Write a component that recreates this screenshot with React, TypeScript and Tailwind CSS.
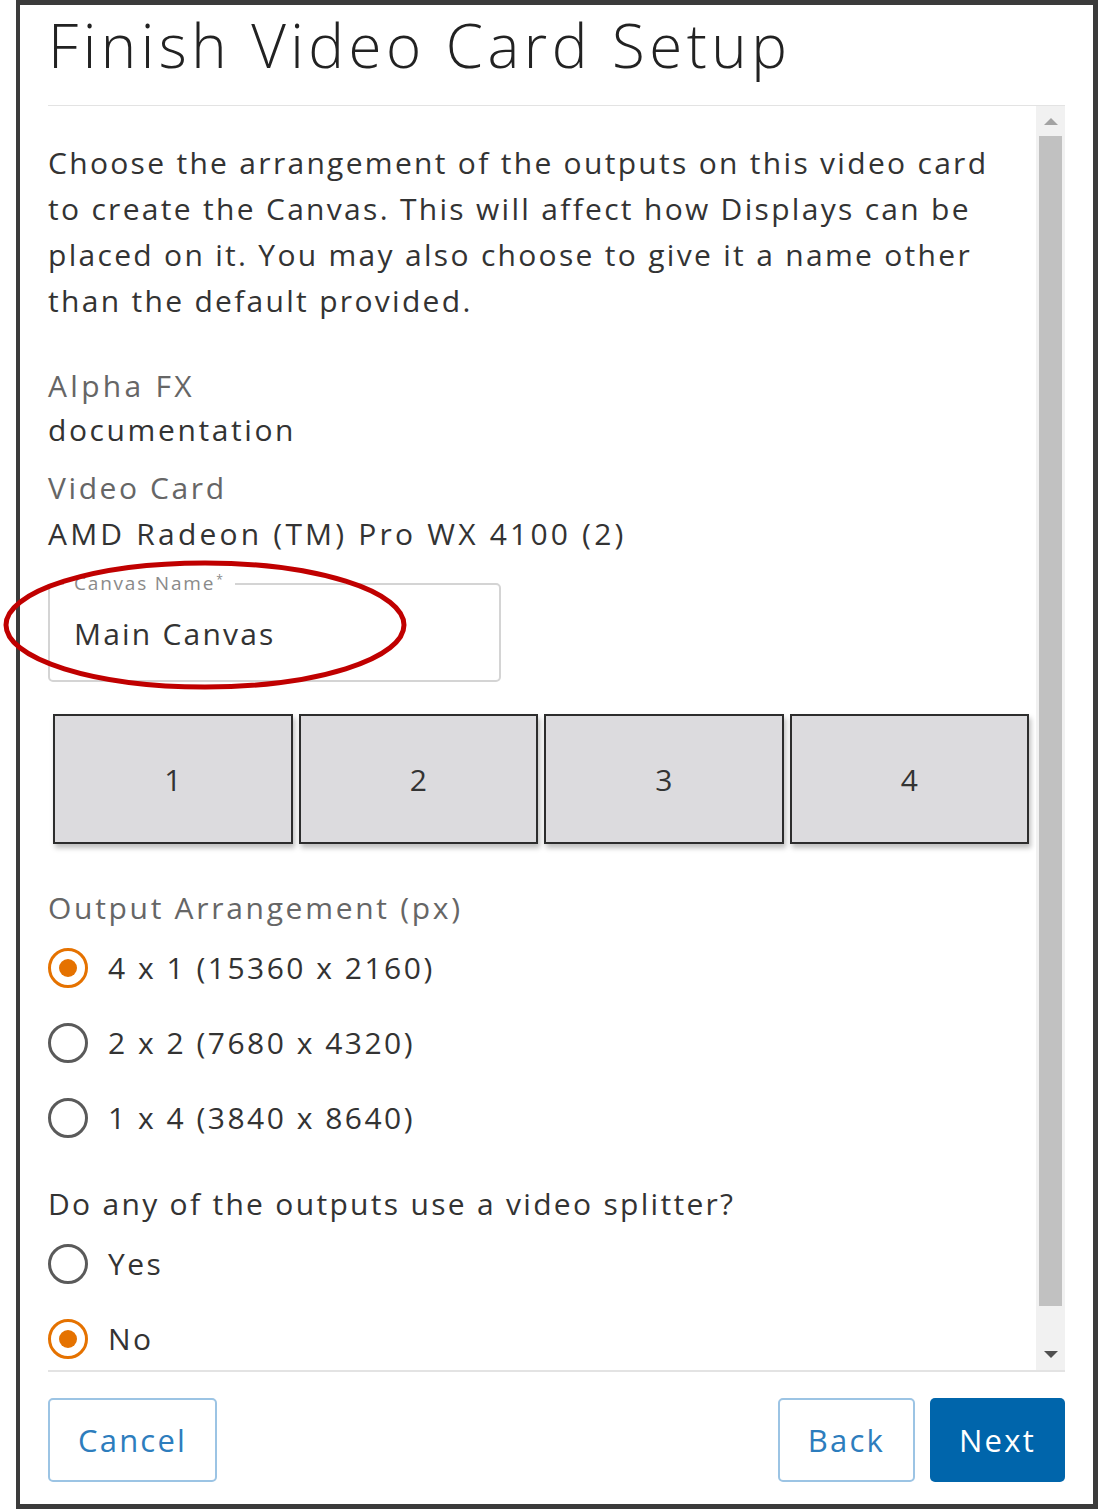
import React, { useState } from 'react';

const FONT = { fontFamily: '"Open Sans", "Noto Sans", Arial, sans-serif' };

function Radio({ checked, label, onClick }: { checked: boolean; label: string; onClick: () => void }) {
  return (
    <button type="button" onClick={onClick} className="flex items-center h-[75px] text-left">
      <span
        className={`flex items-center justify-center w-[40px] h-[40px] rounded-full border-[3px] ${
          checked ? 'border-[#e57200]' : 'border-[#5a5a5a]'
        }`}
      >
        {checked && <span className="w-[18px] h-[18px] rounded-full bg-[#e57200]" />}
      </span>
      <span className="ml-[20px] text-[30px] tracking-[2.5px] text-[#333]">{label}</span>
    </button>
  );
}

export default function App() {
  const [arrangement, setArrangement] = useState('4x1');
  const [splitter, setSplitter] = useState('no');
  const [name, setName] = useState('Main Canvas');

  return (
    <div className="w-[1098px] h-[1509px] bg-white pl-[16px]" style={FONT}>
      <div className="relative h-full flex flex-col border-[5px] border-[#3b3b3b] border-l-[4px] bg-white">
        {/* header */}
        <div className="px-[28px] h-[101px] flex flex-col">
          <h1 className="text-[60px] leading-none font-light tracking-[4.5px] text-[#222] mt-[10px]">
            Finish Video Card Setup
          </h1>
          <div className="mt-auto h-[1px] bg-[#e3e3e3]" />
        </div>

        {/* scroll body */}
        <div className="flex h-[1264px] mx-[28px]">
          <div className="flex-1 min-w-0 pt-[34px] text-[#333]">
            <p className="text-[30px] leading-[46px] tracking-[2.3px] whitespace-nowrap">
              Choose the arrangement of the outputs on this video card
              <br />
              to create the Canvas. This will affect how Displays can be
              <br />
              placed on it. You may also choose to give it a name other
              <br />
              than the default provided.
            </p>

            <div className="mt-[40px] text-[30px] leading-[44px] tracking-[2.6px]">
              <div className="text-[#666] tracking-[3.3px]">Alpha FX</div>
              <div>documentation</div>
            </div>
            <div className="mt-[13px] text-[30px] leading-[46px] tracking-[2.6px]">
              <div className="text-[#666]">Video Card</div>
              <div className="tracking-[3.2px]">AMD Radeon (TM) Pro WX 4100 (2)</div>
            </div>

            {/* canvas name field */}
            <div className="relative mt-[26px] w-[453px] h-[99px] border-[2px] border-[#d4d4d4] rounded-[5px]">
              <span className="absolute -top-[14px] left-[14px] px-[10px] bg-white text-[19px] leading-[24px] tracking-[1.8px] text-[#8a8a8a]">
                Canvas Name<sup className="text-[12px] ml-[1px]">*</sup>
              </span>
              <input
                value={name}
                onChange={e => setName(e.target.value)}
                className="w-full h-full px-[24px] pt-[2px] text-[30px] tracking-[2.2px] text-[#333] outline-none bg-transparent"
              />
            </div>

            {/* output boxes */}
            <div className="mt-[32px] ml-[5px] grid grid-cols-4 gap-[6px] w-[976px]">
              {[1, 2, 3, 4].map(n => (
                <div
                  key={n}
                  className="h-[130px] bg-[#dcdbde] border-[2px] border-[#2d2d2d] shadow-[2px_4px_5px_rgba(0,0,0,0.25)] flex items-center justify-center text-[30px] text-[#333]"
                >
                  {n}
                </div>
              ))}
            </div>

            <div className="mt-[42px] text-[30px] leading-[44px] tracking-[2.7px] text-[#666]">
              Output Arrangement (px)
            </div>
            <div className="flex flex-col">
              <Radio checked={arrangement === '4x1'} label="4 x 1 (15360 x 2160)" onClick={() => setArrangement('4x1')} />
              <Radio checked={arrangement === '2x2'} label="2 x 2 (7680 x 4320)" onClick={() => setArrangement('2x2')} />
              <Radio checked={arrangement === '1x4'} label="1 x 4 (3840 x 8640)" onClick={() => setArrangement('1x4')} />
            </div>

            <div className="mt-[27px] text-[30px] leading-[44px] tracking-[2.3px]">
              Do any of the outputs use a video splitter?
            </div>
            <div className="flex flex-col">
              <Radio checked={splitter === 'yes'} label="Yes" onClick={() => setSplitter('yes')} />
              <Radio checked={splitter === 'no'} label="No" onClick={() => setSplitter('no')} />
            </div>
          </div>

          {/* scrollbar */}
          <div className="flex-none w-[29px] bg-[#f1f1f1] flex flex-col items-center">
            <div className="h-[30px] flex items-center justify-center">
              <span className="w-0 h-0 border-x-[7px] border-x-transparent border-b-[7px] border-b-[#a3a3a3]" />
            </div>
            <div className="w-[23px] h-[1170px] bg-[#c1c1c1]" />
            <div className="flex-1 flex items-end justify-center pb-[12px]">
              <span className="w-0 h-0 border-x-[7px] border-x-transparent border-t-[7px] border-t-[#505050]" />
            </div>
          </div>
        </div>

        {/* footer */}
        <div className="mx-[28px] border-t-[2px] border-[#e3e3e3] flex-1 flex items-start pt-[26px]">
          <button className="h-[84px] px-[28px] rounded-[5px] border-[2px] border-[#9cc4e4] text-[31px] tracking-[2.2px] text-[#2d7dbd] font-medium">
            Cancel
          </button>
          <div className="ml-auto flex gap-[15px]">
            <button className="h-[84px] px-[28px] rounded-[5px] border-[2px] border-[#9cc4e4] text-[31px] tracking-[2.2px] text-[#2d7dbd] font-medium">
              Back
            </button>
            <button className="h-[84px] w-[135px] rounded-[5px] bg-[#0065ab] text-[31px] tracking-[2.2px] text-white font-medium">
              Next
            </button>
          </div>
        </div>

        {/* annotation ellipse */}
        <svg className="absolute left-[-18px] top-[555px] pointer-events-none" width="412" height="140" viewBox="0 0 412 140">
          <ellipse cx="203" cy="65" rx="199" ry="62" fill="none" stroke="#c00000" strokeWidth="5" />
        </svg>
      </div>
    </div>
  );
}
